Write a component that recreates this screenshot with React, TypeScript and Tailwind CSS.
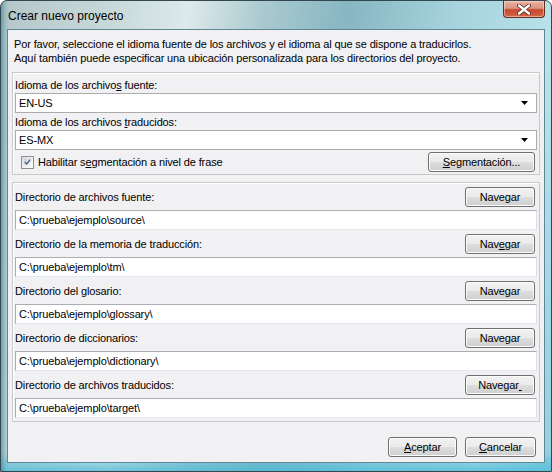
import React from "react";

const Btn = ({ children, className }: { children: React.ReactNode; className: string }) => (
  <div
    className={`flex items-center justify-center h-[20px] rounded-[3px] border border-[#707070] bg-[linear-gradient(#f2f2f2_0%,#ebebeb_48%,#dddddd_52%,#cfcfcf_100%)] shadow-[inset_0_0_0_1px_#fcfcfc] text-[11px] text-black leading-none ${className}`}
  >
    {children}
  </div>
);

const Field = ({ value }: { value: string }) => (
  <div className="h-[20px] bg-white border border-[#abadb3] border-r-[#dbdfe6] border-b-[#e3e9ef] flex items-center pl-[3px] text-[11px] text-black">
    {value}
  </div>
);

const Combo = ({ value }: { value: string }) => (
  <div className="h-[20px] bg-white border border-[#acacac] flex items-center justify-between pl-[3px] pr-[8px] text-[11px] text-black">
    <span>{value}</span>
    <svg width="7" height="4" viewBox="0 0 7 4">
      <path d="M0 0H7L3.5 4Z" fill="#000" />
    </svg>
  </div>
);

const DirRow = ({ label, value, btn }: { label: React.ReactNode; value: string; btn: React.ReactNode }) => (
  <div className="flex flex-col gap-[3px]">
    <div className="flex items-center justify-between h-[20px]">
      <span className="text-[11px] text-black">{label}</span>
      <Btn className="w-[70px] mr-[2px]">{btn}</Btn>
    </div>
    <Field value={value} />
  </div>
);

export default function App() {
  return (
    <div className="w-[552px] h-[472px] relative flex flex-col border border-[#34474f] rounded-t-[7px] overflow-hidden bg-[linear-gradient(to_right,rgba(50,120,145,0.55)_0px,rgba(90,160,180,0.3)_4px,transparent_8px),linear-gradient(to_bottom,transparent_0%,transparent_96%,rgba(70,185,215,0.75)_100%),linear-gradient(100deg,#b4c6c9_0%,#c8d9da_18%,#dde9ea_30%,#a9c9cf_42%,#86b7c2_55%,#a6d3dd_72%,#b9e2ea_88%,#8fcfdf_100%)] font-['Liberation_Sans',Arial,sans-serif] tracking-[-0.13px]">
      {/* title bar */}
      <div className="h-[28px] shrink-0 flex items-center pl-[7px] pt-[1px] text-[12px] text-black tracking-normal">
        Crear nuevo proyecto
      </div>
      {/* close button */}
      <div className="absolute top-0 right-[6px] w-[42px] h-[17px] rounded-b-[4px] border border-t-0 border-[#6a2b1f] bg-[linear-gradient(#e9b2a3_0%,#dc9581_45%,#c6482c_55%,#d4664a_100%)] shadow-[inset_0_0_0_1px_rgba(255,230,220,0.5)] flex items-center justify-center">
        <svg width="14" height="11" viewBox="0 0 14 11">
          <path d="M2 1.5L12 9.5M12 1.5L2 9.5" stroke="#5a2418" strokeWidth="4" strokeLinecap="round" />
          <path d="M2 1.5L12 9.5M12 1.5L2 9.5" stroke="#ffffff" strokeWidth="2.4" strokeLinecap="round" />
        </svg>
      </div>
      {/* client */}
      <div className="flex-1 mx-[6px] mb-[8px] border border-[#5f8795] bg-[#f1f0f2] flex flex-col">
        <div className="pl-[6px] pt-[7px] text-[11px] leading-[14px] text-black">
          <div>Por favor, seleccione el idioma fuente de los archivos y el idioma al que se dispone a traducirlos.</div>
          <div>Aquí también puede especificar una ubicación personalizada para los directorios del proyecto.</div>
        </div>

        {/* group 1 */}
        <div className="mx-[4px] mt-[7px] border border-[#c9c9c9] shadow-[inset_1px_1px_0_#ffffff] pt-[5px] pb-[2px] px-[2px] flex flex-col">
          <div className="h-[14px] leading-[14px] text-[11px] text-black">
            Idioma de los archivo<span className="underline">s</span> fuente:
          </div>
          <div className="mt-[1px]">
            <Combo value="EN-US" />
          </div>
          <div className="mt-[2px] h-[14px] leading-[14px] text-[11px] text-black">
            Idioma de los archivos <span className="underline">t</span>raducidos:
          </div>
          <div className="mt-[1px]">
            <Combo value="ES-MX" />
          </div>
          <div className="mt-[2px] h-[20px] flex items-center justify-between">
            <div className="flex items-center gap-[4px] pl-[6px]">
              <div className="w-[13px] h-[13px] border border-[#8e8f8f] bg-[linear-gradient(135deg,#dcdcdc,#ffffff)] p-[2px]">
                <div className="w-full h-full bg-[linear-gradient(135deg,#cbcfd5,#f6f6f6)] flex items-center justify-center">
                  <svg width="9" height="8" viewBox="0 0 9 8">
                    <path d="M1 4L3.5 6.5L8 1" stroke="#4a5f97" strokeWidth="1.8" fill="none" />
                  </svg>
                </div>
              </div>
              <span className="text-[11px] text-black">
                Habilitar s<span className="underline">e</span>gmentación a nivel de frase
              </span>
            </div>
            <Btn className="w-[107px] mr-[2px]">
              <span>
                <span className="underline">S</span>egmentación...
              </span>
            </Btn>
          </div>
        </div>

        {/* group 2 */}
        <div className="mx-[4px] mt-[7px] border border-[#c9c9c9] shadow-[inset_1px_1px_0_#ffffff] pt-[4px] pb-[3px] px-[2px] flex flex-col gap-[4px]">
          <DirRow label="Directorio de archivos fuente:" value={"C:\\prueba\\ejemplo\\source\\"} btn="Navegar" />
          <DirRow
            label="Directorio de la memoria de traducción:"
            value={"C:\\prueba\\ejemplo\\tm\\"}
            btn={
              <span>
                Nav<span className="underline">e</span>gar
              </span>
            }
          />
          <DirRow label="Directorio del glosario:" value={"C:\\prueba\\ejemplo\\glossary\\"} btn="Navegar" />
          <DirRow label="Directorio de diccionarios:" value={"C:\\prueba\\ejemplo\\dictionary\\"} btn="Navegar" />
          <DirRow
            label="Directorio de archivos traducidos:"
            value={"C:\\prueba\\ejemplo\\target\\"}
            btn={
              <span>
                Navegar<span className="underline">&nbsp;</span>
              </span>
            }
          />
        </div>

        {/* bottom buttons */}
        <div className="mt-[15px] flex justify-end gap-[8px] pr-[8px]">
          <Btn className="w-[69px]">
            <span>
              <span className="underline">A</span>ceptar
            </span>
          </Btn>
          <Btn className="w-[71px]">
            <span>
              <span className="underline">C</span>ancelar
            </span>
          </Btn>
        </div>
      </div>
    </div>
  );
}
